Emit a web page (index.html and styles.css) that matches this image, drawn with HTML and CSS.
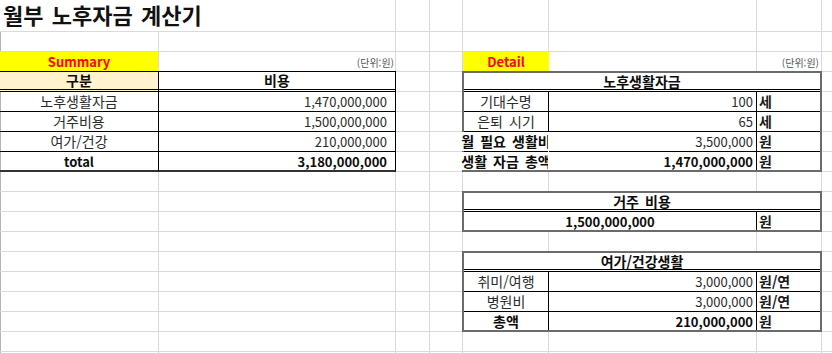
FILE: index.html
```html
<!DOCTYPE html>
<html lang="ko">
<head>
<meta charset="utf-8">
<title>월부 노후자금 계산기</title>
<link rel="stylesheet" href="styles.css">
</head>
<body>
<div class="sheet">
  <div class="title">월부 노후자금 계산기</div>

  <div class="tag tag-sum">Summary</div>
  <div class="unit unit-sum">(단위:원)</div>
  <div class="tag tag-detail">Detail</div>
  <div class="unit unit-detail">(단위:원)</div>

  <div class="sum">
    <div class="c hd peach">구분</div>
    <div class="c hd">비용</div>
    <div class="c ctr">노후생활자금</div><div class="c num">1,470,000,000</div>
    <div class="c ctr">거주비용</div><div class="c num">1,500,000,000</div>
    <div class="c ctr">여가/건강</div><div class="c num">210,000,000</div>
    <div class="c ctr b last lat">total</div><div class="c num b last">3,180,000,000</div>
  </div>

  <div class="box detail">
    <div class="c hd span3">노후생활자금</div>
    <div class="c ctr">기대수명</div><div class="c num">100</div><div class="c u">세</div>
    <div class="c ctr">은퇴 시기</div><div class="c num">65</div><div class="c u">세</div>
    <div class="c ctr ovf b"><span>월 필요 생활비</span></div><div class="c num">3,500,000</div><div class="c u">원</div>
    <div class="c ctr ovf b last"><span>생활 자금 총액</span></div><div class="c num b last">1,470,000,000</div><div class="c u last">원</div>
  </div>

  <div class="box housing">
    <div class="c hd span3">거주 비용</div>
    <div class="c ctr b span2 last lat">1,500,000,000</div><div class="c u last">원</div>
  </div>

  <div class="box leisure">
    <div class="c hd span3">여가/건강생활</div>
    <div class="c ctr">취미/여행</div><div class="c num">3,000,000</div><div class="c u">원/연</div>
    <div class="c ctr">병원비</div><div class="c num">3,000,000</div><div class="c u">원/연</div>
    <div class="c ctr b last">총액</div><div class="c num b last">210,000,000</div><div class="c u last">원</div>
  </div>
</div>
</body>
</html>
```

FILE: styles.css
```css
* { box-sizing: border-box; }
html, body { margin: 0; padding: 0; background: #fff; }
body {
  font-family: "Noto Sans CJK KR", "Noto Sans", sans-serif;
  font-size: 14px;
  word-spacing: 0.15em;
  color: #2b2b2b;
}

.sheet {
  width: 832px;
  height: 353px;
  display: grid;
  grid-template-columns: 159px 237px 34px 33px 86px 208px 65px 10px;
  grid-template-rows: 32px repeat(16, 20px) 1px;
  background:
    repeating-linear-gradient(to bottom, #dadada 0 1px, transparent 1px 20px) 0 31px / 100% 322px no-repeat,
    linear-gradient(#b4b4b4, #b4b4b4) 0 32px / 1px 100% no-repeat,
    linear-gradient(#dadada, #dadada) 158px 32px / 1px 100% no-repeat,
    linear-gradient(#dadada, #dadada) 395px 0 / 1px 100% no-repeat,
    linear-gradient(#dadada, #dadada) 429px 0 / 1px 100% no-repeat,
    linear-gradient(#dadada, #dadada) 462px 0 / 1px 100% no-repeat,
    linear-gradient(#dadada, #dadada) 548px 0 / 1px 100% no-repeat,
    linear-gradient(#dadada, #dadada) 756px 0 / 1px 100% no-repeat,
    linear-gradient(#dadada, #dadada) 821px 0 / 1px 100% no-repeat,
    #fff;
}

.title {
  grid-column: 1 / 3;
  grid-row: 1;
  font-size: 22px;
  font-weight: 700;
  color: #111;
  line-height: 26px;
  padding: 1px 0 0 3px;
  white-space: nowrap;
}

.tag {
  grid-row: 3;
  background: #ffff00;
  color: #ff0000;
  font-weight: 700;
  font-size: 13px;
  display: flex;
  align-items: center;
  justify-content: center;
  line-height: 19px;
}
.tag-sum { grid-column: 1; margin: 0 1px 1px 0; }
.tag-detail { grid-column: 5; margin: 0 0 1px 0; }

.unit {
  grid-row: 3;
  font-size: 10px;
  word-spacing: 0;
  color: #555;
  display: flex;
  align-items: flex-end;
  justify-content: flex-end;
  padding: 0 2px 3px 0;
  line-height: 12px;
}
.unit-sum { grid-column: 2; }
.unit-detail { grid-column: 7; padding-right: 3px; }

.c {
  display: flex;
  align-items: center;
  line-height: 19px;
  white-space: nowrap;
  min-width: 0;
}
.ctr { justify-content: center; }
.num { justify-content: flex-end; font-size: 13px; }
.lat { font-size: 13px; }
.b { font-weight: 700; color: #0d0d0d; }
.hd { justify-content: center; font-weight: 700; color: #0d0d0d; }
.peach { background: #fff2cc; }

/* Summary table */
.sum {
  grid-column: 1 / 3;
  grid-row: 4 / 9;
  margin-top: -1px;
  display: grid;
  grid-template-columns: 159px 237px;
  grid-template-rows: 21px repeat(4, 20px);
}
.sum .c {
  border-right: 1px solid #000;
  border-bottom: 1px solid #000;
}
.sum .hd {
  border-top: 1px solid #000;
  border-bottom: 3px double #000;
  line-height: 17px;
}
.sum .hd:not(.peach) { background: #fff; }
.sum .num { padding-right: 8px; }
.sum .last { border-bottom: 2px solid #333; }

/* Right-hand boxes */
.box {
  grid-column: 5 / 8;
  margin: -1px 0 0 -1px;
  border: 2px solid #6b6b6b;
  display: grid;
  grid-template-columns: 85px 208px 63px;
  background: #fff;
}
.detail { grid-row: 4 / 9; grid-template-rows: 19px 20px 20px 20px 18px; }
.housing { grid-row: 10 / 12; grid-template-rows: 19px 18px; }
.leisure { grid-row: 13 / 17; grid-template-rows: 19px 20px 20px 18px; }

.box .c {
  border-bottom: 1px solid #000;
  border-right: 1px solid #000;
}
.box .hd {
  border-bottom: 3px double #000;
  border-right: 0;
  line-height: 16px;
}
.box .u {
  border-right: 0;
  justify-content: flex-start;
  padding-left: 2px;
  font-weight: 700;
  color: #1a1a1a;
}
.box .num { padding-right: 3px; }
.box .last { border-bottom: 0; }
.span3 { grid-column: 1 / 4; }
.span2 { grid-column: 1 / 3; }

.ovf {
  clip-path: inset(0 1px 0 -60px);
  align-items: stretch;
}
.ovf span {
  display: flex;
  align-items: center;
  background: #fff;
  flex: none;
}
```
